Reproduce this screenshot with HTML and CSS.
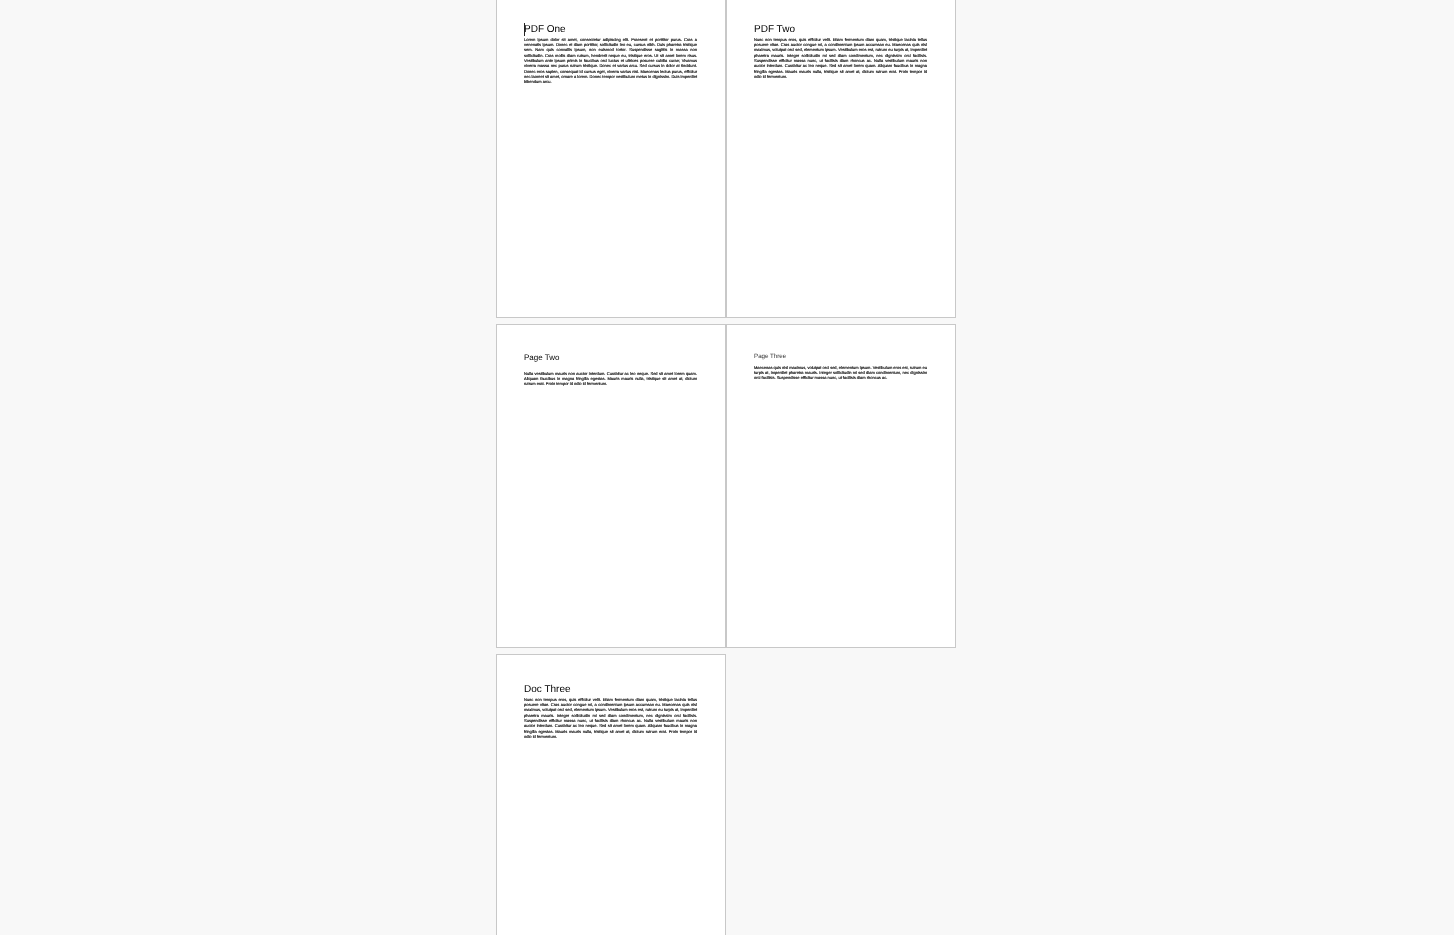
FILE: index.html
```html
<!DOCTYPE html>
<html lang="en">
<head>
<meta charset="utf-8">
<title>PDF pages</title>
<link rel="stylesheet" href="styles.css">
</head>
<body>
<main class="pages">
  <article class="page page-one">
    <h1 class="title title-large"><span class="caret"></span>PDF One</h1>
    <p class="copy">Lorem ipsum dolor sit amet, consectetur adipiscing elit. Praesent et porttitor purus. Cras a venenatis ipsum. Donec et diam porttitor, sollicitudin leo eu, cursus nibh. Duis pharetra tristique sem. Nam quis convallis ipsum, non euismod tortor. Suspendisse sagittis in massa non sollicitudin. Cras mollis diam rutrum, hendrerit neque eu, tristique eros. Ut sit amet lorem risus. Vestibulum ante ipsum primis in faucibus orci luctus et ultrices posuere cubilia curae; Vivamus viverra massa nec purus rutrum tristique. Donec et varius arcu. Sed cursus in dolor at tincidunt. Donec eros sapien, consequat id cursus eget, viverra varius nisi. Maecenas lectus purus, efficitur nec laoreet sit amet, ornare a lorem. Donec tempor vestibulum metus in dignissim. Duis imperdiet bibendum arcu.</p>
  </article>
  <article class="page page-one">
    <h1 class="title title-large">PDF Two</h1>
    <p class="copy">Nunc non tempus eros, quis efficitur velit. Etiam fermentum diam quam, tristique lacinia tellus posuere vitae. Cras auctor congue mi, a condimentum ipsum accumsan eu. Maecenas quis nisl maximus, volutpat orci sed, elementum ipsum. Vestibulum eros est, rutrum eu turpis at, imperdiet pharetra mauris. Integer sollicitudin mi sed diam condimentum, nec dignissim orci facilisis. Suspendisse efficitur massa nunc, ut facilisis diam rhoncus ac. Nulla vestibulum mauris non auctor interdum. Curabitur ac leo neque. Sed sit amet lorem quam. Aliquam faucibus in magna fringilla egestas. Mauris mauris nulla, tristique sit amet at, dictum rutrum erat. Proin tempor id odio id fermentum.</p>
  </article>
  <article class="page page-two">
    <h2 class="title title-mid">Page Two</h2>
    <p class="copy">Nulla vestibulum mauris non auctor interdum. Curabitur ac leo neque. Sed sit amet lorem quam. Aliquam faucibus in magna fringilla egestas. Mauris mauris nulla, tristique sit amet at, dictum rutrum erat. Proin tempor id odio id fermentum.</p>
  </article>
  <article class="page page-three">
    <h2 class="title title-small">Page Three</h2>
    <p class="copy">Maecenas quis nisl maximus, volutpat orci sed, elementum ipsum. Vestibulum eros est, rutrum eu turpis at, imperdiet pharetra mauris. Integer sollicitudin mi sed diam condimentum, nec dignissim orci facilisis. Suspendisse efficitur massa nunc, ut facilisis diam rhoncus ac.</p>
  </article>
  <article class="page page-doc">
    <h1 class="title title-large">Doc Three</h1>
    <p class="copy">Nunc non tempus eros, quis efficitur velit. Etiam fermentum diam quam, tristique lacinia tellus posuere vitae. Cras auctor congue mi, a condimentum ipsum accumsan eu. Maecenas quis nisl maximus, volutpat orci sed, elementum ipsum. Vestibulum eros est, rutrum eu turpis at, imperdiet pharetra mauris. Integer sollicitudin mi sed diam condimentum, nec dignissim orci facilisis. Suspendisse efficitur massa nunc, ut facilisis diam rhoncus ac. Nulla vestibulum mauris non auctor interdum. Curabitur ac leo neque. Sed sit amet lorem quam. Aliquam faucibus in magna fringilla egestas. Mauris mauris nulla, tristique sit amet at, dictum rutrum erat. Proin tempor id odio id fermentum.</p>
  </article>
</main>
</body>
</html>
```
FILE: styles.css
```css
html, body {
  margin: 0;
  height: 100%;
  overflow: hidden;
  background: #f8f8f8;
}
.pages {
  display: grid;
  grid-template-columns: 230px 230px;
  grid-auto-rows: 324px;
  row-gap: 6px;
  justify-content: center;
  margin: -6px 2px 0 0;
  font-family: "Liberation Sans", Arial, sans-serif;
  color: #000;
  text-rendering: geometricPrecision;
}
.page {
  box-sizing: border-box;
  background: #fff;
  border: 1px solid #c8c8c8;
  padding: 0 28px 0 27px;
}
.title {
  position: relative;
  margin: 0;
  font-weight: 400;
  white-space: nowrap;
  filter: grayscale(1) blur(0.2px);
}
.title-large {
  font-size: 10px;
  line-height: 12px;
}
.title-mid {
  font-size: 8px;
  line-height: 10px;
  padding-top: 28px;
}
.title-small {
  font-size: 6.2px;
  line-height: 8px;
  padding-top: 27.5px;
  color: #333;
}
.copy {
  margin: 0;
  font-size: 4px;
  line-height: 5.35px;
  text-align: justify;
  color: #000;
  -webkit-text-stroke: 0.14px #000;
  filter: grayscale(1) blur(0.2px);
}
.page-one .title { padding-top: 29px; }
.page-one .copy { padding-top: 0.6px; }
.page-doc .title { padding-top: 29px; }
.page-doc .copy { padding-top: 0.6px; }
.page-two .copy { padding-top: 7.5px; }
.page-three .copy { padding-top: 4.2px; }
.caret {
  position: absolute;
  left: 0;
  top: 28px;
  width: 1px;
  height: 13px;
  background: #1a2340;
}
```
